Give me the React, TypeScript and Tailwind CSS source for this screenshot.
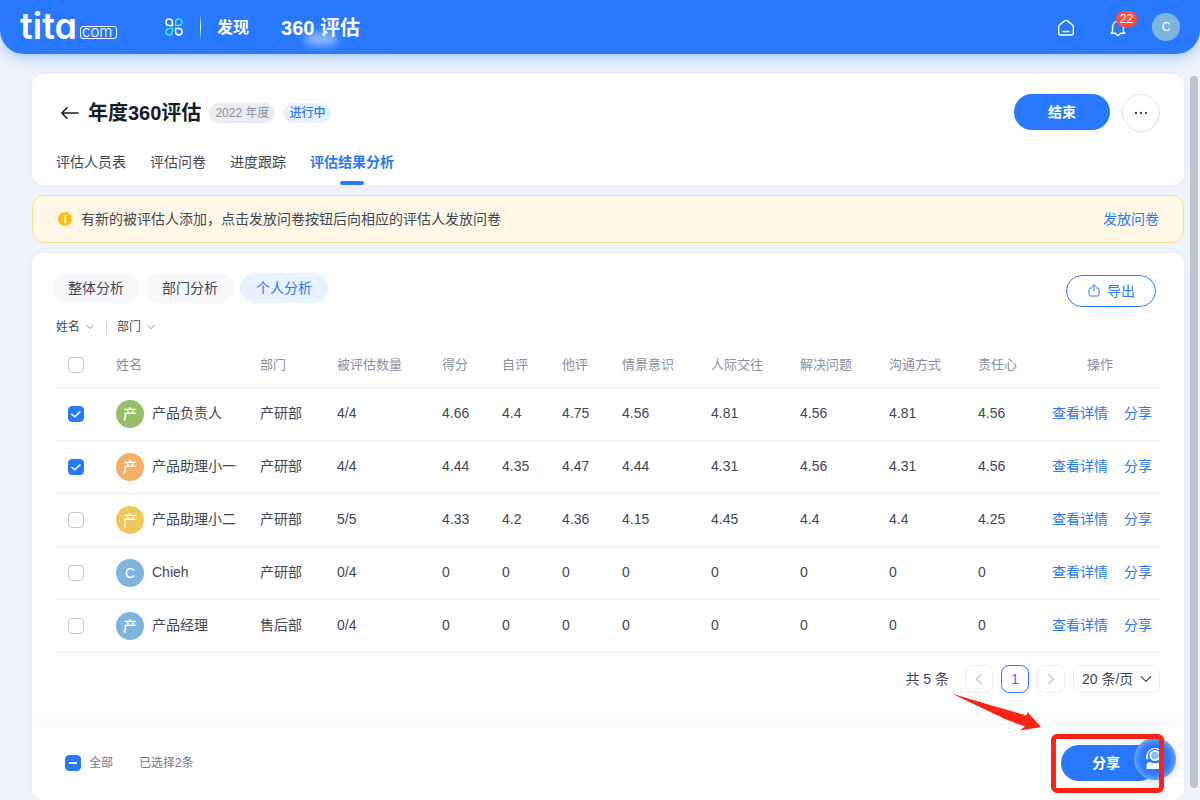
import { useState } from 'react'
import type { ReactNode } from 'react'

interface Person {
  id: number
  name: string
  initial: string
  color: string
  dept: string
  reviewed: string
  scores: string[]
}

const PEOPLE: Person[] = [
  { id: 1, name: '产品负责人', initial: '产', color: 'bg-[#95be65]', dept: '产研部', reviewed: '4/4', scores: ['4.66', '4.4', '4.75', '4.56', '4.81', '4.56', '4.81', '4.56'] },
  { id: 2, name: '产品助理小一', initial: '产', color: 'bg-[#f5ae67]', dept: '产研部', reviewed: '4/4', scores: ['4.44', '4.35', '4.47', '4.44', '4.31', '4.56', '4.31', '4.56'] },
  { id: 3, name: '产品助理小二', initial: '产', color: 'bg-[#f0c75b]', dept: '产研部', reviewed: '5/5', scores: ['4.33', '4.2', '4.36', '4.15', '4.45', '4.4', '4.4', '4.25'] },
  { id: 4, name: 'Chieh', initial: 'C', color: 'bg-[#7fb5dc]', dept: '产研部', reviewed: '0/4', scores: ['0', '0', '0', '0', '0', '0', '0', '0'] },
  { id: 5, name: '产品经理', initial: '产', color: 'bg-[#7fb5dc]', dept: '售后部', reviewed: '0/4', scores: ['0', '0', '0', '0', '0', '0', '0', '0'] },
]

const COLUMNS = ['姓名', '部门', '被评估数量', '得分', '自评', '他评', '情景意识', '人际交往', '解决问题', '沟通方式', '责任心']
const TABS = ['评估人员表', '评估问卷', '进度跟踪', '评估结果分析']
const VIEWS = ['整体分析', '部门分析', '个人分析']

function Chevron({ className }: { className: string }) {
  return (
    <svg viewBox="0 0 10 10" className={className} fill="none" stroke="currentColor" aria-hidden="true">
      <path d="M1 3l4 4 4-4" strokeLinecap="round" strokeLinejoin="round" />
    </svg>
  )
}

interface CheckboxProps {
  label: string
  checked: boolean
  partial?: boolean
  onChange: () => void
}

function Checkbox({ label, checked, partial, onChange }: CheckboxProps) {
  return (
    <span className="relative block h-4 w-4">
      <input
        type="checkbox"
        aria-label={label}
        checked={checked}
        onChange={onChange}
        className="block h-4 w-4 appearance-none rounded border border-[#bfc7d5] bg-white checked:border-[#2879ff] checked:bg-[#2879ff]"
      />
      {checked && (
        <svg viewBox="0 0 16 16" className="pointer-events-none absolute inset-0 h-4 w-4" fill="none" stroke="#fff" aria-hidden="true">
          {partial ? (
            <path d="M4 8h8" strokeWidth="2" />
          ) : (
            <path d="M3.8 8.2l2.9 2.6 5.3-4.9" strokeWidth="1.5" strokeLinecap="round" strokeLinejoin="round" />
          )}
        </svg>
      )}
    </span>
  )
}

function FilterSelect({ label }: { label: string }) {
  return (
    <span className="relative flex items-center">
      <select aria-label={label} className="h-5 w-[38px] appearance-none bg-transparent text-xs leading-5 text-[#3f4755]">
        <option>{label}</option>
      </select>
      <Chevron className="pointer-events-none absolute right-0 h-2 w-2 text-[#6f7886]" />
    </span>
  )
}

function PageButton({ label, active, children }: { label: string; active?: boolean; children: ReactNode }) {
  return (
    <button
      aria-label={label}
      className={`flex h-7 w-7 items-center justify-center rounded-lg border ${
        active ? 'border-[#2879ff] text-[#2879ff]' : 'border-[#e9ecf0] text-[#bfc7d5]'
      }`}
    >
      {children}
    </button>
  )
}

function Logo() {
  return (
    <svg viewBox="0 0 100 40" className="h-10 w-[100px] overflow-visible font-['Inter',sans-serif] [font-feature-settings:'cv11']" role="img" aria-label="tita.com">
      <text x="0" y="32" fill="#fff" fontWeight="600" fontSize="36">tita</text>
      <rect x="60.5" y="19.5" width="36" height="12" rx="2.5" fill="none" stroke="#fff" />
      <text x="62" y="30" fill="#fff" fontWeight="300" fontSize="15">com</text>
    </svg>
  )
}

function TopBar() {
  return (
    <header className="relative z-10 flex h-[54px] items-center rounded-b-3xl bg-[#2879ff] px-5 text-white shadow-[0_4px_14px_rgba(40,121,255,0.35)]">
      <Logo />
      <button aria-label="应用" className="ml-[45px]">
        <svg viewBox="0 0 18 18" className="h-[18px] w-[18px]" fill="none" strokeWidth="1.5" aria-hidden="true">
          <path d="M7.4 7.4H4.2A3.2 3.2 0 1 1 7.4 4.2z" stroke="#fff" />
          <path d="M10.6 7.4V4.2a3.2 3.2 0 1 1 3.2 3.2z" stroke="#3fe6ff" />
          <path d="M7.4 10.6v3.2a3.2 3.2 0 1 1-3.2-3.2z" stroke="#3fe6ff" />
          <path d="M10.6 10.6h3.2a3.2 3.2 0 1 1-3.2 3.2z" stroke="#fff" />
        </svg>
      </button>
      <span className="ml-[17px] h-7 w-px bg-linear-to-b from-white/0 via-white to-white/0" />
      <nav className="ml-4 flex items-center gap-8 pt-0.5 font-bold">
        <a href="#discover" className="text-base">发现</a>
        <a href="#review" className="relative text-xl">
          360 评估
          <span className="absolute bottom-[-3px] left-6 h-3 w-8 rounded-full bg-white/50 blur-[4px]" />
        </a>
      </nav>
      <div className="ml-auto flex items-center">
        <button aria-label="首页">
          <svg viewBox="0 0 18 18" className="h-[18px] w-[18px]" fill="none" stroke="#fff" strokeWidth="1.4" strokeLinecap="round" strokeLinejoin="round" aria-hidden="true">
            <path d="M1.7 8.6c0-.7.3-1.3.9-1.7l5.2-4.1c.7-.5 1.7-.5 2.4 0l5.2 4.1c.6.4.9 1 .9 1.7V15c0 1.1-.9 2-2 2H3.7c-1.1 0-2-.9-2-2z" />
            <path d="M6.2 13.5h5.6" />
          </svg>
        </button>
        <button aria-label="通知" className="relative ml-[34px]">
          <svg viewBox="0 0 18 18" className="h-[18px] w-[18px]" fill="none" stroke="#fff" strokeWidth="1.4" strokeLinecap="round" strokeLinejoin="round" aria-hidden="true">
            <path d="M3.6 13V8.5a5.4 5.4 0 0 1 10.8 0V13l1.3 2.3h-4.2c-.5 1.2-1.3 1.9-2.5 1.9s-2-.7-2.5-1.9H2.3z" />
          </svg>
          <span className="absolute top-[-7px] left-[7px] h-4 w-[21px] rounded-full bg-[#ff4d42] text-center text-xs leading-4">22</span>
        </button>
        <span className="ml-[25px] flex h-7 w-7 items-center justify-center rounded-full bg-[#7fb5dc] text-xs">C</span>
      </div>
    </header>
  )
}

export default function App() {
  const [tab, setTab] = useState('评估结果分析')
  const [view, setView] = useState('个人分析')
  const [selected, setSelected] = useState<number[]>([1, 2])

  function toggle(id: number) {
    setSelected((prev) => (prev.includes(id) ? prev.filter((x) => x !== id) : [...prev, id]))
  }

  function toggleAll() {
    setSelected((prev) => (prev.length === PEOPLE.length ? [] : PEOPLE.map((p) => p.id)))
  }

  const allSelected = selected.length === PEOPLE.length

  return (
    <div className="relative flex min-h-screen flex-col bg-[#eff3fb] font-['Liberation_Sans','Noto_Sans_CJK_SC',sans-serif] text-sm text-[#3f4755]">
      <TopBar />

      <main className="flex flex-1 flex-col gap-2.5 pt-5 pr-4 pl-8">
        {/* Title and tabs */}
        <section className="rounded-xl bg-white px-6 pt-5 shadow-[0_0_8px_rgba(80,110,160,0.06)]">
          <div className="flex justify-between">
            <div className="flex items-center">
              <button aria-label="返回" className="ml-1">
                <svg viewBox="0 0 20 20" className="h-5 w-5" fill="none" stroke="#141c28" strokeWidth="1.5" strokeLinecap="round" strokeLinejoin="round" aria-hidden="true">
                  <path d="M18 10H2M7 4.8L1.8 10 7 15.2" />
                </svg>
              </button>
              <h1 className="ml-2 text-xl font-semibold text-[#141c28]">年度360评估</h1>
              <span className="ml-2 rounded-full bg-[#ebecf0] px-1.5 text-xs leading-5 text-[#89919f]">2022 年度</span>
              <span className="ml-2 rounded-full bg-[#e8f1ff] px-1.5 text-xs leading-5 font-medium text-[#2879ff]">进行中</span>
            </div>
            <div className="flex items-start gap-3">
              <button className="h-9 w-24 rounded-full bg-[#2879ff] font-bold text-white">结束</button>
              <button aria-label="更多" className="flex h-[38px] w-[38px] items-center justify-center rounded-full border border-[#e0e3ea]">
                <svg viewBox="0 0 14 4" className="h-1 w-3.5" fill="#3f4755" aria-hidden="true">
                  <circle cx="2" cy="2" r="1.2" />
                  <circle cx="7" cy="2" r="1.2" />
                  <circle cx="12" cy="2" r="1.2" />
                </svg>
              </button>
            </div>
          </div>
          <nav className="mt-5 flex gap-6">
            {TABS.map((t) => (
              <button
                key={t}
                onClick={() => setTab(t)}
                className={`relative flex h-[33px] items-start leading-5 ${t === tab ? 'font-bold text-[#2879ff]' : ''}`}
              >
                {t}
                {t === tab && <span className="absolute bottom-0 left-1/2 h-1 w-6 -translate-x-1/2 rounded-sm bg-[#2879ff]" />}
              </button>
            ))}
          </nav>
        </section>

        {/* Notice */}
        <section className="flex h-12 items-center rounded-xl border border-[#fadf8e] bg-[#fff8e6] px-6">
          <svg viewBox="0 0 16 16" className="h-4 w-4" aria-hidden="true">
            <circle cx="8" cy="8" r="7" fill="#fabe14" />
            <circle cx="8.8" cy="4.8" r="1" fill="#fff" />
            <path d="M7 7.2h1.5l-.8 4H9" fill="none" stroke="#fff" strokeWidth="1.2" />
          </svg>
          <p className="ml-2">有新的被评估人添加，点击发放问卷按钮后向相应的评估人发放问卷</p>
          <a href="#send" className="ml-auto text-[#2879ff]">发放问卷</a>
        </section>

        {/* Results */}
        <section className="flex flex-1 flex-col overflow-hidden rounded-xl bg-white pt-5 shadow-[0_0_8px_rgba(80,110,160,0.06)]">
          <div className="flex items-start justify-between pr-7 pl-5">
            <div className="flex gap-1.5">
              {VIEWS.map((v) => (
                <button
                  key={v}
                  onClick={() => setView(v)}
                  className={`h-[30px] rounded-full px-4 ${v === view ? 'bg-[#e8f1ff] text-[#2879ff]' : 'bg-[#f6f8fa]'}`}
                >
                  {v}
                </button>
              ))}
            </div>
            <button className="mt-0.5 flex h-8 w-[90px] items-center justify-center gap-1.5 rounded-full border border-[#2879ff] text-[#2879ff]">
              <svg viewBox="0 0 14 14" className="h-3.5 w-3.5" fill="none" stroke="currentColor" strokeLinecap="round" strokeLinejoin="round" aria-hidden="true">
                <path d="M4.5 4h-1A1.5 1.5 0 0 0 2 5.5v5A1.5 1.5 0 0 0 3.5 12h7a1.5 1.5 0 0 0 1.5-1.5v-5A1.5 1.5 0 0 0 10.5 4h-1M7 7V1M4.8 2.8L7 .7l2.2 2.1" />
              </svg>
              导出
            </button>
          </div>

          <div className="mt-2.5 flex items-center px-6">
            <FilterSelect label="姓名" />
            <span className="mr-2.5 ml-3 h-5 w-px bg-linear-to-b from-[#bfc7d5]/20 via-[#bfc7d5] to-[#bfc7d5]/20" />
            <FilterSelect label="部门" />
          </div>

          <div className="mt-1 px-6">
            <table className="w-full table-fixed text-left">
              <colgroup>
                <col className="w-[60px]" />
                <col className="w-[144px]" />
                <col className="w-[77px]" />
                <col className="w-[105px]" />
                <col className="w-[60px]" />
                <col className="w-[60px]" />
                <col className="w-[60px]" />
                <col className="w-[89px]" />
                <col className="w-[89px]" />
                <col className="w-[89px]" />
                <col className="w-[89px]" />
                <col className="w-[74px]" />
                <col className="w-[108px]" />
              </colgroup>
              <thead>
                <tr className="h-[46px] border-b border-[#e9ecf0] text-[13px] text-[#89919f]">
                  <th className="pt-0.5 pl-3">
                    <Checkbox label="全选" checked={allSelected} onChange={toggleAll} />
                  </th>
                  {COLUMNS.map((c) => (
                    <th key={c} className="pt-1 font-normal">{c}</th>
                  ))}
                  <th className="pt-1 pr-3 text-center font-normal">操作</th>
                </tr>
              </thead>
              <tbody>
                {PEOPLE.map((p) => (
                  <tr key={p.id} className="h-[53px] border-b border-[#e9ecf0]">
                    <td className="pl-3">
                      <Checkbox label={p.name} checked={selected.includes(p.id)} onChange={() => toggle(p.id)} />
                    </td>
                    <td>
                      <div className="flex items-center gap-2">
                        <span className={`flex h-7 w-7 items-center justify-center rounded-full font-medium text-white ${p.color}`}>{p.initial}</span>
                        <span className="pb-0.5">{p.name}</span>
                      </div>
                    </td>
                    <td className="pb-0.5">{p.dept}</td>
                    <td className="pb-0.5">{p.reviewed}</td>
                    {p.scores.map((s, i) => (
                      <td key={i} className="pb-0.5">{s}</td>
                    ))}
                    <td className="pb-0.5 whitespace-nowrap text-[#2879ff]">
                      <a href="#detail">查看详情</a>
                      <a href="#share" className="ml-4">分享</a>
                    </td>
                  </tr>
                ))}
              </tbody>
            </table>
          </div>

          <div className="mt-3 flex items-center justify-end gap-2 px-6 pb-8">
            <span className="mr-2">共 5 条</span>
            <PageButton label="上一页">
              <Chevron className="h-3 w-3 rotate-90" />
            </PageButton>
            <PageButton label="第1页" active>1</PageButton>
            <PageButton label="下一页">
              <Chevron className="h-3 w-3 -rotate-90" />
            </PageButton>
            <span className="relative flex items-center">
              <select aria-label="每页条数" className="h-7 w-[87px] appearance-none rounded-lg border border-[#e9ecf0] bg-white pl-2 text-sm">
                <option>20 条/页</option>
              </select>
              <Chevron className="pointer-events-none absolute right-2 h-3 w-3" />
            </span>
          </div>

          {/* Selection bar */}
          <div className="mt-auto flex h-[74px] items-center pr-[27px] pl-[33px] text-xs text-[#6f7886] shadow-[0_-2px_12px_rgba(80,110,130,0.08)]">
            <Checkbox label="全部" checked={selected.length > 0} partial={!allSelected} onChange={toggleAll} />
            <span className="ml-2">全部</span>
            <span className="ml-[26px]">已选择{selected.length}条</span>
            <button className="ml-auto h-9 w-24 rounded-full bg-[#2879ff] pr-1.5 text-sm font-bold text-white">分享</button>
          </div>
        </section>
      </main>

      {/* Scroll thumb */}
      <div className="absolute top-[76px] right-0.5 bottom-3 w-2 rounded-full bg-[#bcc4d2]" />

      {/* Support bubble */}
      <button
        aria-label="客服"
        className="absolute right-6 bottom-5 flex h-[42px] w-[42px] items-center justify-center rounded-full bg-[#2879ff] shadow-[inset_0_0_9px_rgba(255,255,255,0.6),0_2px_10px_rgba(40,80,160,0.2)]"
      >
        <svg viewBox="0 0 24 24" className="h-6 w-6" fill="none" stroke="#fff" aria-hidden="true">
          <circle cx="12" cy="8.5" r="4.7" fill="#8db8ff" strokeWidth="1.8" />
          <path d="M4 9.5c.5-5 3.500-8 8-8s7.500 3 8 8" strokeWidth="1.2" strokeLinecap="round" />
          <path d="M4 8.5v3M20 8.5v3" strokeWidth="2" strokeLinecap="round" />
          <path d="M3.5 21v-2.5A3.5 3.5 0 0 1 7 15c3 1.6 7 1.6 10 0a3.5 3.5 0 0 1 3.500 3.500V21c0 .6-.4 1-1 1h-15c-.6 0-1-.4-1-1z" fill="#fff" stroke="none" />
        </svg>
      </button>

      {/* Callout on the share button */}
      <div className="pointer-events-none absolute right-9 bottom-[7px] h-[59px] w-[113px] rounded-md border-[5px] border-[#ff2314]" />
      <svg viewBox="0 0 90 38" className="pointer-events-none absolute right-[159px] bottom-[69px] h-[38px] w-[90px]" fill="#ff2314" aria-hidden="true">
        <path d="M.5.5L39 12l36.500 10.500 1-3.500L90 34l-21 3.500 5-4L54 26z" />
      </svg>
    </div>
  )
}
